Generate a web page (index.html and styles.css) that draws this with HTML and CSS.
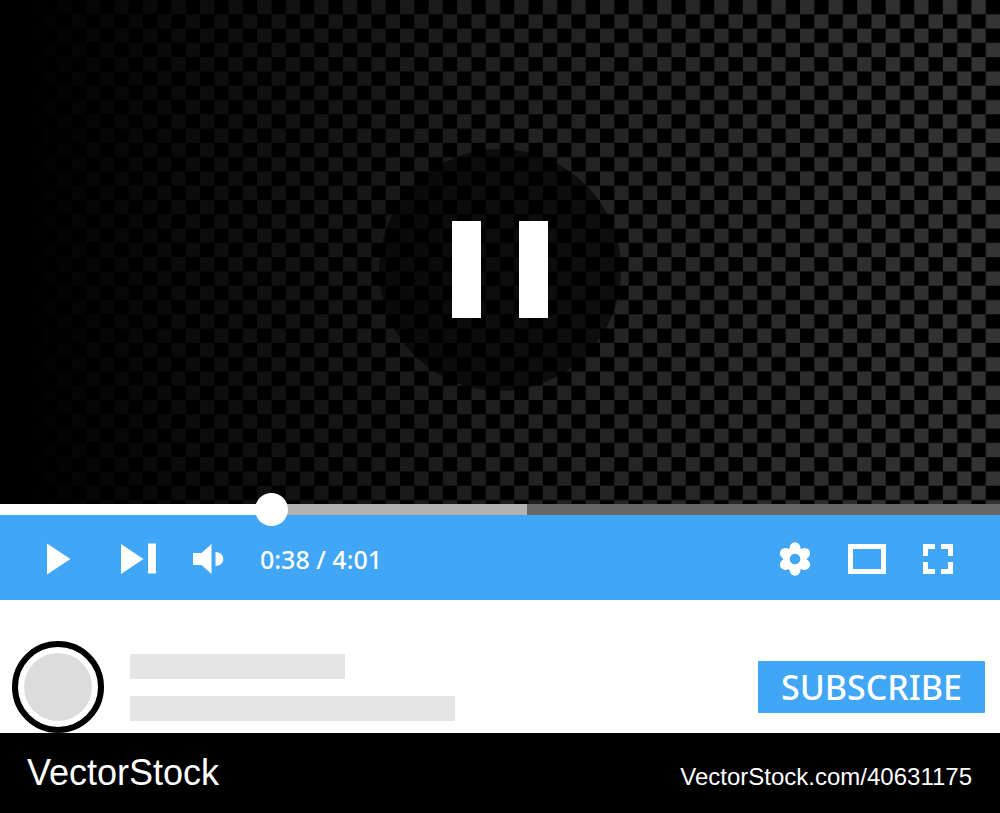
FILE: index.html
```html
<!DOCTYPE html>
<html lang="en">
<head>
    <meta charset="UTF-8">
    <meta name="viewport" content="width=device-width, initial-scale=1.0">
    <title>Video Player</title>
    <link rel="stylesheet" href="styles.css">
</head>
<body>

<main class="player">
    <div class="screen">
        <svg class="checker" viewBox="0 0 70 36" preserveAspectRatio="xMinYMin slice" aria-hidden="true">
            <defs>
                <pattern id="squares" width="2" height="2" patternUnits="userSpaceOnUse">
                    <rect width="1" height="1" fill="#343434"/>
                    <rect x="1" y="1" width="1" height="1" fill="#343434"/>
                </pattern>
                <linearGradient id="fade">
                    <stop offset="0.02" stop-color="#000"/>
                    <stop offset="0.5" stop-color="#000" stop-opacity="0.4"/>
                    <stop offset="1" stop-color="#000" stop-opacity="0"/>
                </linearGradient>
            </defs>
            <rect width="70" height="36" fill="url(#squares)"/>
            <rect width="70" height="36" fill="url(#fade)"/>
        </svg>
        <button class="pause-btn" aria-label="Pause">
            <span class="pause-bar"></span>
            <span class="pause-bar"></span>
        </button>
    </div>

    <input class="progress" type="range" min="0" max="100" step="0.1" value="26.4" aria-label="Seek">

    <div class="controls">
        <button class="icon-btn play" aria-label="Play">
            <svg width="24" height="32" viewBox="0 0 24 32"><path d="M0 0.5 23.5 16 0 31.5z"/></svg>
        </button>
        <button class="icon-btn next" aria-label="Next">
            <svg width="36" height="32" viewBox="0 0 36 32"><path d="M0 1 22.5 16 0 31zM27 0.5h8v30h-8z"/></svg>
        </button>
        <button class="icon-btn volume" aria-label="Volume">
            <svg width="31" height="32" viewBox="0 0 31 32"><path d="M0 10h8.500L18.500 1v30L8.500 22H0zM22.500 9c4.500 0 7.800 3 7.800 7s-3.300 7-7.800 7z"/></svg>
        </button>
        <span class="time">0:38 / 4:01</span>

        <button class="icon-btn settings" aria-label="Settings">
            <svg width="32" height="34" viewBox="-16 -17 32 34">
                <g>
                    <circle r="12"/>
                    <ellipse cy="-10.500" rx="5.500" ry="6.200"/>
                    <ellipse cy="-10.500" rx="5.500" ry="6.200" transform="rotate(60)"/>
                    <ellipse cy="-10.500" rx="5.500" ry="6.200" transform="rotate(120)"/>
                    <ellipse cy="-10.500" rx="5.500" ry="6.200" transform="rotate(180)"/>
                    <ellipse cy="-10.500" rx="5.500" ry="6.200" transform="rotate(240)"/>
                    <ellipse cy="-10.500" rx="5.500" ry="6.200" transform="rotate(300)"/>
                </g>
                <circle class="hole" r="5.300"/>
            </svg>
        </button>
        <button class="icon-btn theater" aria-label="Theater mode">
            <svg width="38" height="30" viewBox="0 0 38 30"><path fill-rule="evenodd" d="M0 0h38v30H0zM5 5v20h28V5z"/></svg>
        </button>
        <button class="icon-btn fullscreen" aria-label="Full screen">
            <svg width="30" height="30" viewBox="0 0 30 30"><path d="M0 0h12v5H5v7H0zM18 0h12v12h-5V5h-7zM0 18h5v7h7v5H0zM25 18h5v12H18v-5h7z"/></svg>
        </button>
    </div>
</main>

<section class="channel">
    <div class="avatar"></div>
    <div class="info">
        <div class="line short"></div>
        <div class="line"></div>
    </div>
    <button class="subscribe-btn">SUBSCRIBE</button>
</section>

<footer class="footer">
    <span class="brand">VectorStock</span>
    <a class="link" href="#">VectorStock.com/40631175</a>
</footer>

</body>
</html>
```
FILE: styles.css
```css
* {
    box-sizing: border-box;
}

body {
    margin: 0;
    min-height: 100vh;
    display: flex;
    flex-direction: column;
    background-color: #fff;
    font-family: 'Noto Sans', 'Open Sans', sans-serif;
}

button {
    border: none;
    padding: 0;
    font-family: inherit;
    cursor: pointer;
}

.screen {
    position: relative;
    display: flex;
    justify-content: center;
    align-items: center;
    aspect-ratio: 125 / 63;
    padding-top: 35px;
    background-color: #000;
    overflow: hidden;
}

.checker {
    position: absolute;
    top: 0;
    left: 0;
    width: 100%;
    height: 100%;
}

.pause-btn {
    position: relative;
    display: flex;
    justify-content: center;
    align-items: center;
    gap: 38px;
    width: 242px;
    height: 242px;
    border-radius: 50%;
    background-color: rgba(0, 0, 0, 0.6);
}

.pause-bar {
    width: 29px;
    height: 97px;
    background-color: #fff;
}

/* played / buffered / remaining */
.progress {
    -webkit-appearance: none;
    appearance: none;
    position: relative;
    display: block;
    width: 100%;
    height: 11px;
    margin: 0;
    background: linear-gradient(to right, #fff 27%, #b2b2b2 27%, #b2b2b2 52.7%, #666 52.7%);
    cursor: pointer;
}

.progress::-webkit-slider-runnable-track {
    height: 11px;
}

.progress::-webkit-slider-thumb {
    -webkit-appearance: none;
    width: 33px;
    height: 33px;
    margin-top: -11px;
    border-radius: 50%;
    background-color: #fff;
}

.controls {
    display: flex;
    align-items: center;
    height: 85px;
    padding: 2px 47px 0;
    background-color: #41a6f5;
}

.icon-btn {
    display: flex;
    background: none;
}

.icon-btn svg {
    fill: #fff;
}

.icon-btn .hole {
    fill: #41a6f5;
}

.next {
    margin-left: 50px;
}

.volume {
    margin-left: 36px;
}

.time {
    margin-left: 36px;
    color: #fff;
    font-size: 25px;
    font-weight: 500;
    line-height: 32px;
}

.settings {
    margin-left: auto;
}

.theater,
.fullscreen {
    margin-left: 37px;
}

.channel {
    display: flex;
    align-items: center;
    padding: 41px 15px 0 12px;
}

.avatar {
    width: 92px;
    height: 92px;
    padding: 6px;
    border: 6px solid #000;
    border-radius: 50%;
    background-color: #dcdcdc;
    background-clip: content-box;
}

.info {
    flex: 1;
    display: flex;
    flex-direction: column;
    gap: 17px;
    margin: 0 26px;
}

.line {
    max-width: 325px;
    height: 25px;
    background-color: #e5e5e5;
}

.line.short {
    max-width: 215px;
}

.subscribe-btn {
    width: 227px;
    height: 52px;
    border-radius: 1px;
    background-color: #41a6f5;
    color: #fff;
    font-size: 34px;
    font-weight: 500;
    line-height: 52px;
}

.footer {
    flex: 1;
    display: flex;
    justify-content: space-between;
    align-items: baseline;
    min-height: 80px;
    padding: 18px 28px 0 27px;
    background-color: #000;
    color: #fff;
    font-family: 'Liberation Sans', Arial, sans-serif;
}

.brand {
    font-size: 36px;
    line-height: 44px;
}

.link {
    color: inherit;
    font-size: 24px;
    text-decoration: none;
}
```
